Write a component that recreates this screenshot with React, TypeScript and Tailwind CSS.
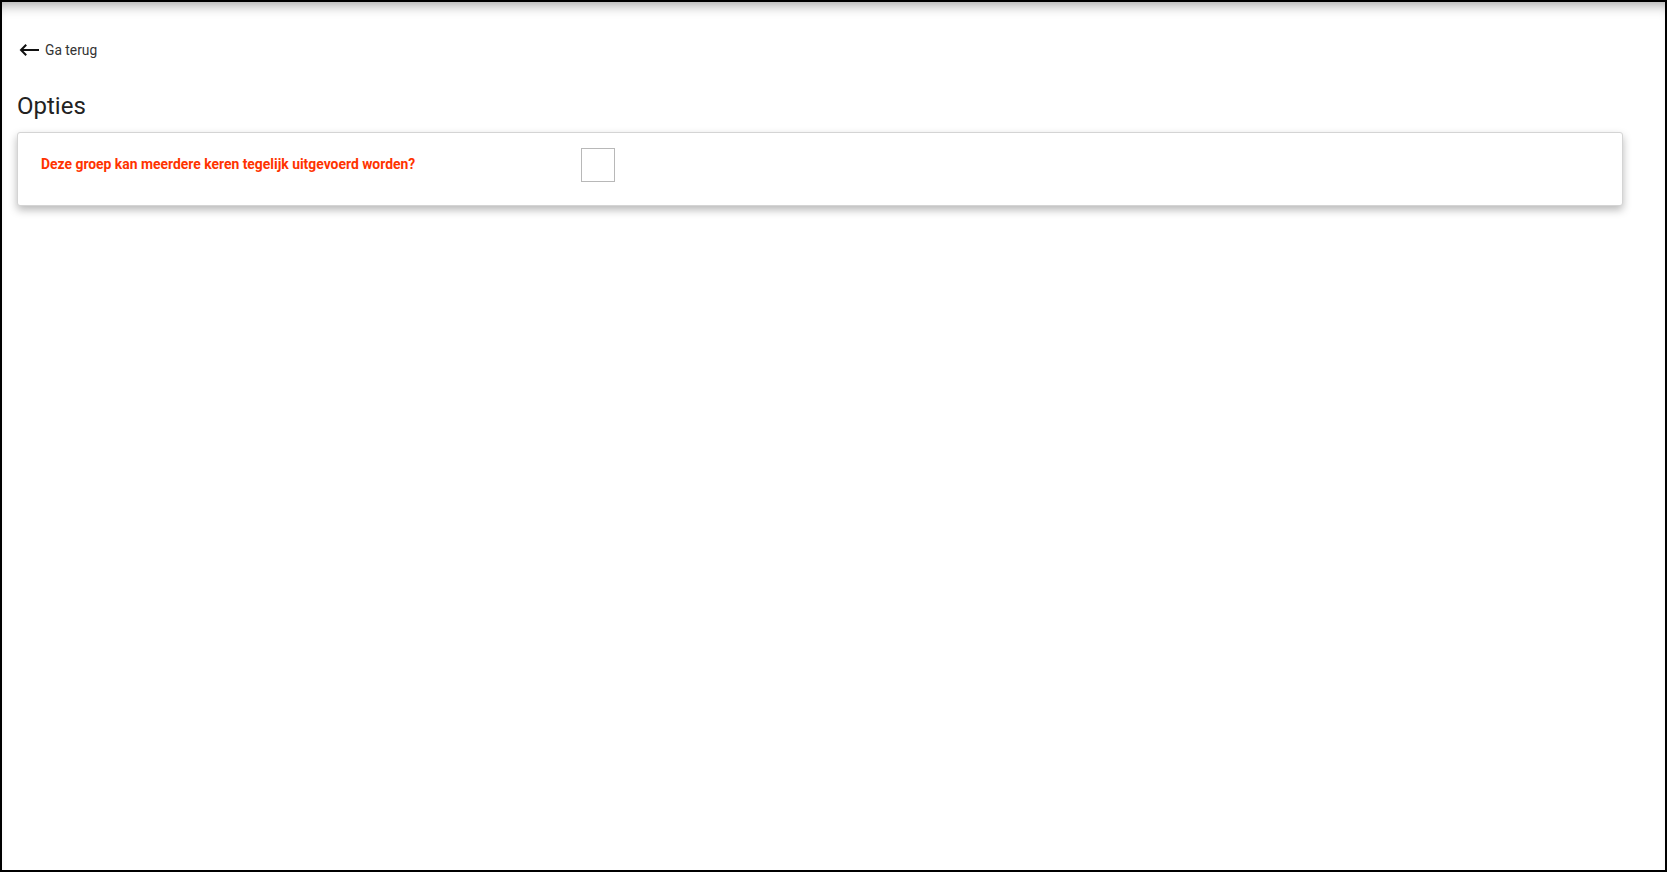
import { useState } from "react";

export default function App() {
  const [multiple, setMultiple] = useState(false);

  return (
    <div
      className="h-screen w-full border-2 border-black bg-white shadow-[inset_0_12px_14px_-10px_rgba(0,0,0,0.4)]"
      style={{ fontFamily: "Roboto, 'Liberation Sans', sans-serif" }}
    >
      <div className="pl-[15px]">
        {/* back link */}
        <button className="mt-[39px] flex h-[18px] items-center gap-[6px] pl-[2px] text-[13.8px] text-[#333]">
          <svg width="20" height="12" viewBox="0 0 20 12" fill="none">
            <path d="M20 6H2" stroke="#111" strokeWidth="2" />
            <path d="M6.5 1.5L2 6L6.5 10.5" stroke="#111" strokeWidth="2" strokeLinecap="square" />
          </svg>
          <span>Ga terug</span>
        </button>

        <h1 className="mt-[33px] h-[28px] text-[24px] leading-[28px] text-[#222]">Opties</h1>

        {/* options card */}
        <div className="mr-[42px] mt-[12px] rounded-[3px] border border-[#d4d4d4] bg-white shadow-[0_4px_8px_rgba(0,0,0,0.28)]">
          <div className="flex items-center pb-[23px] pl-[23px] pt-[15px]">
            <label className="mb-[2px] w-[540px] shrink-0 text-[13.9px] font-bold text-[#ff3300]">
              Deze groep kan meerdere keren tegelijk uitgevoerd worden?
            </label>
            <button
              onClick={() => setMultiple(!multiple)}
              className="flex h-[34px] w-[34px] items-center justify-center border border-[#b8b8b8] bg-white"
            >
              {multiple && (
                <svg width="20" height="20" viewBox="0 0 20 20" fill="none">
                  <path d="M4 10l4 4 8-8" stroke="#333" strokeWidth="2" />
                </svg>
              )}
            </button>
          </div>
        </div>
      </div>
    </div>
  );
}
